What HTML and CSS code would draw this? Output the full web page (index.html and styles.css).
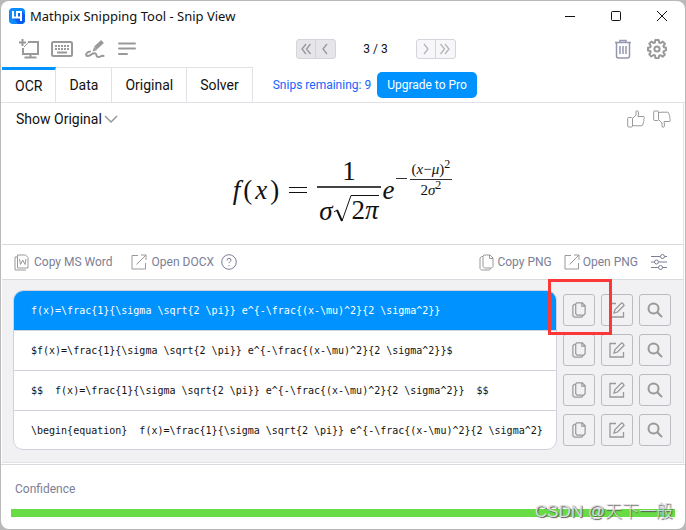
FILE: index.html
```html
<!DOCTYPE html>
<html lang="en">
<head>
    <meta charset="UTF-8">
    <title>Mathpix Snipping Tool - Snip View</title>
    <link rel="stylesheet" href="styles.css">
</head>
<body>
<svg class="sprite" width="0" height="0" aria-hidden="true">
    <symbol id="copy" viewBox="0 0 15 17">
        <path d="M5 1H11l3 3v8.500L12.500 14H5.500L4 12.500V2zM10.500 1v3.500H14M4 2.500H2.500L1 4v10.500L2.500 16h8l1.500-2"/>
    </symbol>
    <symbol id="open" viewBox="0 0 16 16">
        <path d="M7 1.500H1v13.500h13.500V9M5.500 10.500L15 1M10 1h5v5"/>
    </symbol>
    <symbol id="edit" viewBox="0 0 16 16">
        <path d="M7 1.500H1v13.500h13.500V10M5 11l1-3.500L12.500 1Q14 .500 15 3.500L8.500 10z"/>
    </symbol>
    <symbol id="search" viewBox="0 0 16 16">
        <circle cx="6.500" cy="6.500" r="5"/>
        <path d="M10 10l5 5"/>
    </symbol>
    <symbol id="thumb" viewBox="0 0 18 18">
        <path d="M.700 8.500q0-1 1-1h2.800q1 0 1 1v7.500q0 1-1 1H1.700q-1 0-1-1zM5.500 8.500L9 5V1.800Q9 .700 10.200.700 11.500.700 11.500 3L11 6.500h5q1.300 0 1.300 1.300 0 1-.700 1.400.900 1.200-.100 2.400.500 1.300-.500 2.200 0 2-1.700 2H9L5.500 15.500"/>
    </symbol>
</svg>
<div class="window">
    <div class="title-bar">
        <svg class="logo" viewBox="0 0 16 16">
            <rect width="16" height="16" rx="4" fill="#0a8cff"/>
            <path d="M4 10l5 6h3q4 0 4-4V7l-3-4z" fill="#0a5cf0"/>
            <path d="M4 3v6.500h8M12 13V4H8v5.500" fill="none" stroke="#fff" stroke-width="2"/>
        </svg>
        <span class="title">Mathpix Snipping Tool - Snip View</span>
        <button class="win-btn" aria-label="Minimize"><svg viewBox="0 0 12 12"><path d="M1 6.500h10"/></svg></button>
        <button class="win-btn" aria-label="Maximize"><svg viewBox="0 0 12 12"><rect x="1.500" y="1.500" width="9" height="9" rx="1"/></svg></button>
        <button class="win-btn" aria-label="Close"><svg viewBox="0 0 12 12"><path d="M1 1l10 10M11 1L1 11"/></svg></button>
    </div>
    <div class="toolbar">
        <div class="tools">
            <button aria-label="New snip"><svg width="20" height="20" viewBox="0 0 20 20"><path d="M3.500 0v7M0 3.500h7M9 3h10v12H4V9M11.500 15v3M5.500 18.500h12" stroke-width="2"/><path d="M5 8l4-4"/></svg></button>
            <button aria-label="Keyboard"><svg width="22" height="16" viewBox="0 0 22 16"><rect x="1" y="1" width="20" height="14" rx="1.500" stroke-width="2"/><path d="M4 5h14M4 8h14" stroke-width="2" stroke-dasharray="2 1"/><path d="M6 11.500h10" stroke-width="2"/></svg></button>
            <button aria-label="Draw"><svg width="20" height="20" viewBox="0 0 20 20"><path d="M17.500 2.500L10.500 9" stroke-width="4"/><path d="M9.200 8l3 3-4.700 1.500z" fill="#999" stroke="none"/><path d="M5 12.500c-4 .500-5 4.500-2.500 4.500 3 0 5-3.500 8-2.500 2 1.500 0 3.500 3 3.500 2 0 3-2 5-1" stroke-width="2" stroke-linecap="round"/></svg></button>
            <button aria-label="Menu"><svg width="20" height="16" viewBox="0 0 20 16"><path d="M2 2.500h16M2 7.500h16M2 13h8" stroke-width="2" stroke-linecap="round"/></svg></button>
        </div>
        <div class="pager">
            <div class="pager-group prev">
                <button aria-label="First"><svg viewBox="0 0 12 12"><path d="M6 1L2 6l4 5M10.500 1l-4 5 4 5"/></svg></button>
                <button aria-label="Previous"><svg viewBox="0 0 12 12"><path d="M8 1L4 6l4 5"/></svg></button>
            </div>
            <span>3 / 3</span>
            <div class="pager-group">
                <button aria-label="Next"><svg viewBox="0 0 12 12"><path d="M4 1l4 5-4 5"/></svg></button>
                <button aria-label="Last"><svg viewBox="0 0 12 12"><path d="M1.500 1l4 5-4 5M6 1l4 5-4 5"/></svg></button>
            </div>
        </div>
        <div class="actions">
            <button aria-label="Delete"><svg class="trash" width="18" height="20" viewBox="0 0 18 20"><path d="M1 3.500h16M6 3V1.500h6V3M2.500 4v13q0 2 2 2h9q2 0 2-2V4M6 7v8M9 7v8M12 7v8"/></svg></button>
            <button aria-label="Settings"><svg width="20" height="20" viewBox="0 0 20 20" stroke-width="2" stroke-linejoin="round"><path d="M8.300 1h3.400l.500 2.500 1.300.600 2.300-1.500 2.100 2.200-1.500 2.300.500 1.200 2.100.500v2.600l-2.200.700-.500 1.200 1.600 2.200-2.200 2.200-2.200-1.500-1.300.500-.600 2.500H8.500L8 16.500 6.500 16l-2.200 1.500-2-2.200 1.400-2.200-.500-1.200L1 11.400V8.800l2.200-.600.600-1.200L2.300 4.800l2.100-2.200L6.600 4l1.300-.500z"/><circle cx="10" cy="10" r="2.600"/></svg></button>
        </div>
    </div>
    <div class="tabs">
        <button class="tab active">OCR</button>
        <button class="tab">Data</button>
        <button class="tab">Original</button>
        <button class="tab">Solver</button>
        <a class="snips" href="#">Snips remaining: 9</a>
        <button class="upgrade">Upgrade to Pro</button>
    </div>
    <div class="content">
        <div class="preview-head">
            <button class="show-original">Show Original<svg width="14" height="8" viewBox="0 0 14 8"><path d="M1 1l6 6 6-6"/></svg></button>
            <div class="votes">
                <button aria-label="Good result"><svg width="18" height="18"><use href="#thumb"/></svg></button>
                <button aria-label="Bad result"><svg class="down" width="18" height="18"><use href="#thumb"/></svg></button>
            </div>
        </div>
        <div class="formula">
            <span class="fx"><i>f</i><span>(</span><i>x</i><span>)</span></span>
            <svg class="equals" width="18" height="8" viewBox="0 0 18 8"><path d="M0 1.500h18M0 6.500h18"/></svg>
            <span class="frac">
                <span class="num">1</span>
                <span class="den"><i>σ</i><svg width="19" height="28" viewBox="0 0 19 28"><path d="M1 17l3-2M19 .500h-1L9 26"/><path d="M4 15l5 11" stroke-width="2"/></svg><span class="radicand">2<i>π</i></span></span>
            </span>
            <i class="e">e</i>
            <span class="exponent">
                <span class="minus"></span>
                <span class="small-frac">
                    <span class="num">(<i>x</i>−<i>μ</i>)<sup>2</sup></span>
                    <span class="den">2<i>σ</i><sup>2</sup></span>
                </span>
            </span>
        </div>
        <div class="export-bar">
            <button><svg width="15" height="17" viewBox="0 0 15 17"><path d="M3.500 1h8L14 3.500V14H3.500zM3.500 3H1v13h11"/><path d="M5.500 5l1 5.500L8.700 6l2.300 4.500L12 5"/></svg>Copy MS Word</button>
            <button class="docx"><svg width="16" height="16"><use href="#open"/></svg>Open DOCX</button>
            <button class="help" aria-label="Help"><svg width="16" height="16" viewBox="0 0 16 16"><circle cx="8" cy="8" r="7.300"/><path d="M6 6.500q0-2.200 2-2.200t2 1.900c0 1.500-2 1.400-2 3M8 11v1.200"/></svg></button>
            <button class="png"><svg width="15" height="17"><use href="#copy"/></svg>Copy PNG</button>
            <button class="open-png"><svg width="16" height="16"><use href="#open"/></svg>Open PNG</button>
            <button class="sliders" aria-label="Options"><svg width="16" height="16" viewBox="0 0 16 16"><path d="M0 2.500h9.500M13.500 2.500H16M0 8h3.500M7.500 8H16M0 13.500h7.500M11.500 13.500H16"/><circle cx="11.500" cy="2.500" r="2"/><circle cx="5.500" cy="8" r="2"/><circle cx="9.500" cy="13.500" r="2"/></svg></button>
        </div>
        <div class="results">
            <div class="codes">
                <button class="code selected">f(x)=\frac{1}{\sigma \sqrt{2 \pi}} e^{-\frac{(x-\mu)^2}{2 \sigma^2}}</button>
                <button class="code">$f(x)=\frac{1}{\sigma \sqrt{2 \pi}} e^{-\frac{(x-\mu)^2}{2 \sigma^2}}$</button>
                <button class="code">$$  f(x)=\frac{1}{\sigma \sqrt{2 \pi}} e^{-\frac{(x-\mu)^2}{2 \sigma^2}}  $$</button>
                <button class="code">\begin{equation}  f(x)=\frac{1}{\sigma \sqrt{2 \pi}} e^{-\frac{(x-\mu)^2}{2 \sigma^2}</button>
            </div>
            <div class="code-actions">
                <div class="marked">
                    <button aria-label="Copy"><svg><use href="#copy"/></svg></button>
                    <span class="marker"></span>
                </div>
                <button aria-label="Edit"><svg><use href="#edit"/></svg></button>
                <button aria-label="Search"><svg class="bold"><use href="#search"/></svg></button>
                <button aria-label="Copy"><svg><use href="#copy"/></svg></button>
                <button aria-label="Edit"><svg><use href="#edit"/></svg></button>
                <button aria-label="Search"><svg class="bold"><use href="#search"/></svg></button>
                <button aria-label="Copy"><svg><use href="#copy"/></svg></button>
                <button aria-label="Edit"><svg><use href="#edit"/></svg></button>
                <button aria-label="Search"><svg class="bold"><use href="#search"/></svg></button>
                <button aria-label="Copy"><svg><use href="#copy"/></svg></button>
                <button aria-label="Edit"><svg><use href="#edit"/></svg></button>
                <button aria-label="Search"><svg class="bold"><use href="#search"/></svg></button>
            </div>
        </div>
    </div>
    <div class="confidence">
        <span class="label" id="confidence-label">Confidence</span>
        <div class="bar" role="meter" aria-labelledby="confidence-label" aria-valuenow="100"></div>
    </div>
    <span class="watermark">CSDN @天下一般</span>
</div>
</body>
</html>
```

FILE: styles.css
```css
* {
    box-sizing: border-box;
}

body {
    margin: 0;
    padding: 1px;
    background-color: #b9b9b9;
    font-family: Roboto, "Noto Sans CJK SC", sans-serif;
    font-size: 12px;
    color: #111;
}

button {
    display: flex;
    align-items: center;
    justify-content: center;
    padding: 0;
    border: 0;
    background: none;
    font: inherit;
    color: inherit;
}

svg {
    display: block;
    flex: none;
    fill: none;
    stroke: #999;
}

.sprite {
    position: absolute;
}

.window {
    position: relative;
    border-radius: 8px;
    background-color: #fff;
    overflow: hidden;
}

.title-bar {
    display: flex;
    align-items: center;
    height: 29px;
    padding: 0 0 0 8px;
}

.logo {
    width: 16px;
    height: 16px;
    stroke: none;
}

.title {
    flex: 1;
    margin-left: 5px;
    font-family: "Noto Sans", sans-serif;
    font-size: 13px;
}

.win-btn {
    width: 46px;
    height: 29px;
}

.win-btn svg {
    width: 12px;
    height: 12px;
    stroke: #111;
}

.toolbar {
    display: flex;
    align-items: center;
    justify-content: space-between;
    height: 37px;
    padding: 0 18px;
}

.tools {
    display: flex;
    align-items: center;
    gap: 12px;
}

.actions {
    display: flex;
    align-items: center;
    gap: 15px;
}

.trash {
    stroke: #9496ad;
    stroke-width: 1.5;
}

.pager {
    display: flex;
    align-items: center;
    justify-content: space-between;
    width: 160px;
    font-size: 12px;
}

.pager-group {
    display: flex;
    width: 40px;
    height: 20px;
    border: 1px solid #d4d4dc;
    border-radius: 3px;
    background-color: #f7f7fa;
}

.pager-group.prev {
    background-color: #e5e5ea;
}

.pager-group button {
    flex: 1;
}

.pager-group button + button {
    border-left: 1px solid #d4d4dc;
}

.pager-group svg {
    width: 12px;
    height: 12px;
    stroke: #b4b4bb;
    stroke-width: 1.3;
}

.pager-group.prev svg {
    stroke: #97979d;
}

.tabs {
    display: flex;
    align-items: center;
    height: 36px;
    padding-left: 1px;
    border-bottom: 1px solid #e2e2e6;
}

.tab {
    height: 35px;
    padding: 0 13px;
    border-top: 1px solid #e2e2e6;
    border-right: 1px solid #e2e2e6;
    font-size: 14px;
}

.tab.active {
    height: 36px;
    border-top: 3px solid #0093ff;
}

.snips {
    margin-left: 20px;
    color: #1463ff;
    text-decoration: none;
}

.upgrade {
    height: 26px;
    margin-left: 6px;
    padding: 0 10px;
    border-radius: 5px;
    background-color: #0093ff;
    color: #fff;
}

.content {
    margin: 0 1px;
    border-right: 1px solid #e2e2e6;
    border-bottom: 1px solid #e2e2e6;
}

.preview-head {
    display: flex;
    align-items: center;
    justify-content: space-between;
    height: 32px;
    padding: 0 12px 0 14px;
}

.show-original {
    font-size: 14px;
    gap: 2px;
}

.show-original svg {
    stroke-width: 1.5;
}

.votes {
    display: flex;
    gap: 8px;
}

.down {
    transform: rotate(180deg) scaleX(-1);
}

.formula {
    display: flex;
    align-items: center;
    justify-content: center;
    height: 109px;
    font-family: "Liberation Serif", serif;
    font-size: 27px;
    line-height: 24px;
}

.fx {
    display: flex;
    gap: 3px;
}

.equals {
    margin: 0 10px;
    stroke: #111;
}

.frac {
    display: flex;
    flex-direction: column;
    align-items: center;
}

.frac > .num {
    height: 29px;
    padding-top: 2px;
}

.frac > .den {
    display: flex;
    align-items: flex-end;
    height: 37px;
    padding: 0 2px;
    border-top: 2px solid #444;
}

.frac svg {
    stroke: #111;
}

.radicand {
    height: 28px;
    padding-top: 2px;
    border-top: 1px solid #111;
}

.e {
    margin-left: 2px;
}

.exponent {
    display: flex;
    align-items: center;
    gap: 3px;
    height: 58px;
    padding-bottom: 22px;
    margin-left: 1px;
    font-size: 15px;
    line-height: 16px;
}

.minus {
    width: 11px;
    height: 1px;
    background-color: #333;
}

.small-frac {
    text-align: center;
}

.small-frac .num,
.small-frac .den {
    display: block;
    height: 18px;
}

.small-frac .num {
    padding: 0 2px;
}

.small-frac .den {
    border-top: 1px solid #333;
    padding-top: 2px;
}

.small-frac sup {
    font-size: 12px;
    line-height: 0;
}

.export-bar {
    display: flex;
    align-items: center;
    height: 36px;
    padding: 0 16px 0 12px;
    border-top: 1px solid #d9d9e0;
    border-bottom: 1px solid #d9d9e0;
    color: #7c7e96;
}

.export-bar button {
    gap: 5px;
}

.docx {
    margin-left: 18px;
}

.help {
    margin-left: 7px;
}

.help svg,
.sliders svg {
    stroke: #7c7e96;
}

.png {
    margin-left: auto;
}

.export-bar .png,
.export-bar .open-png {
    gap: 3px;
}

.open-png {
    margin-left: 12px;
}

.sliders {
    margin-left: 13px;
}

.results {
    display: flex;
    gap: 6px;
    padding: 10px 12px 12px 11px;
    background-color: #f1f1f4;
}

.codes {
    flex: 1;
    min-width: 0;
    border: 1px solid #d2d2de;
    border-radius: 10px;
    overflow: hidden;
    background-color: #fff;
}

.code {
    justify-content: flex-start;
    width: 100%;
    height: 40px;
    padding: 0 17px;
    font-family: "DejaVu Sans Mono", monospace;
    font-size: 10px;
    white-space: pre;
}

.code + .code {
    border-top: 1px solid #d2d2de;
}

.code.selected {
    height: 39px;
    background-color: #0093ff;
    color: #fff;
}

.code:last-child {
    height: 39px;
}

.code-actions {
    display: grid;
    grid-template-columns: repeat(3, 32px);
    gap: 8px 6px;
    align-content: start;
    padding: 4px 0;
}

.code-actions button {
    width: 32px;
    height: 32px;
    border: 1px solid #bbbbc1;
    border-radius: 3px;
}

.code-actions svg {
    width: 16px;
    height: 16px;
    stroke-width: 1.3;
}

.code-actions .bold {
    stroke-width: 2;
}

.marked {
    position: relative;
}

/* highlight around the first copy button */
.marker {
    position: absolute;
    top: -15px;
    left: -15px;
    z-index: 1;
    width: 64px;
    height: 56px;
    border: 3px solid #fb3838;
    pointer-events: none;
}

.confidence {
    margin-top: 1px;
    padding: 16px 10px 12px;
    border-top: 1px solid #d9d9e0;
    line-height: 16px;
    color: #7c7e96;
}

.label {
    padding-left: 4px;
}

.bar {
    height: 8px;
    margin-top: 12px;
    background-color: #67dc45;
}

.watermark {
    position: absolute;
    right: 12px;
    bottom: 6px;
    font-family: "Liberation Sans", "Noto Sans CJK SC", sans-serif;
    font-size: 17px;
    font-weight: 300;
    line-height: 22px;
    color: #ddd;
    text-shadow: 1px 1px 1px #555;
}
```
